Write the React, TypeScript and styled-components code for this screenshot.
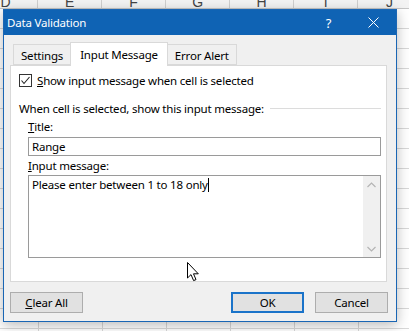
import React from 'react';
import styled, { createGlobalStyle } from 'styled-components';

const GlobalStyle = createGlobalStyle`
  html, body {
    margin: 0;
    padding: 0;
    background: #fff;
  }
  body {
    font-family: 'Noto Sans', 'Open Sans', sans-serif;
    font-size: 11.5px;
    letter-spacing: -0.2px;
    color: #000;
  }
`;

const Sheet = styled.div`
  position: relative;
  width: 409px;
  height: 331px;
  overflow: hidden;
  background: #fff;
`;

const ColumnHeader = styled.div`
  display: flex;
  height: 8px;
  margin-left: -26px;
  background: #f3f3f3;
  border-bottom: 1px solid #c6c6c6;
`;

const ColumnCell = styled.div`
  flex: 0 0 64px;
  height: 8px;
  box-sizing: border-box;
  border-right: 1px solid #cfcfcf;
  display: flex;
  align-items: flex-end;
  justify-content: center;
  overflow: hidden;
  font-family: 'Liberation Sans', sans-serif;
  font-size: 14px;
  line-height: 1;
  color: #444;

  span {
    margin-bottom: -1px;
  }
`;

const Grid = styled.div`
  height: 322px;
  background-image: linear-gradient(to right, #d8d8d8 1px, transparent 1px),
    linear-gradient(to bottom, #d8d8d8 1px, transparent 1px);
  background-size: 64px 100%, 100% 20px;
  background-position: 38px 0, 0 19px;
`;

const Dialog = styled.div`
  position: absolute;
  left: 3px;
  top: 9px;
  width: 394px;
  height: 313px;
  box-sizing: border-box;
  border: 1px solid #1a66b4;
  background: #f0f0f0;
  display: flex;
  flex-direction: column;
  box-shadow: 0 3px 12px rgba(0, 0, 0, 0.28);
`;

const TitleBar = styled.div`
  height: 25px;
  background: #0f63b4;
  display: flex;
  align-items: center;
  color: #fff;
`;

const TitleText = styled.div`
  flex: 1;
  padding-left: 3px;
  font-size: 11.5px;
`;

const CaptionButton = styled.div`
  width: 45px;
  height: 25px;
  display: flex;
  align-items: center;
  justify-content: center;
  color: #fff;
  font-size: 13px;
`;

const Body = styled.div`
  flex: 1;
  display: flex;
  flex-direction: column;
  padding: 7px 9px 8px 6px;
`;

const TabStrip = styled.div`
  display: flex;
  align-items: flex-end;
  padding-left: 3px;
  position: relative;
  z-index: 1;
`;

const Tab = styled.div<{ $active?: boolean }>`
  box-sizing: border-box;
  height: ${(p) => (p.$active ? '24px' : '21px')};
  margin-bottom: ${(p) => (p.$active ? '-1px' : '0')};
  padding: ${(p) => (p.$active ? '0 9px' : '0 7px')};
  display: flex;
  align-items: center;
  justify-content: center;
  background: ${(p) => (p.$active ? '#fff' : '#f0f0f0')};
  border: 1px solid #d9d9d9;
  border-bottom: ${(p) => (p.$active ? 'none' : '1px solid #d9d9d9')};
  & + & {
    margin-left: -1px;
  }
  padding-top: ${(p) => (p.$active ? '0' : '1px')};
`;

const Panel = styled.div`
  height: 217px;
  box-sizing: border-box;
  background: #fff;
  border: 1px solid #d9d9d9;
  padding: 8px 5px 0 8px;
  display: flex;
  flex-direction: column;
`;

const CheckRow = styled.label`
  display: flex;
  align-items: center;
  gap: 5px;
  height: 13px;
`;

const CheckBox = styled.span`
  width: 13px;
  height: 13px;
  box-sizing: border-box;
  border: 1px solid #333;
  display: flex;
  align-items: center;
  justify-content: center;
`;

const GroupLabel = styled.div`
  display: flex;
  align-items: center;
  height: 16px;
  margin-top: 13px;
  white-space: nowrap;

  &::after {
    content: '';
    flex: 1;
    height: 1px;
    margin-left: 6px;
    background: #dcdcdc;
  }
`;

const Fields = styled.div`
  display: flex;
  flex-direction: column;
  margin-left: 9px;
`;

const FieldLabel = styled.div<{ $gap: number }>`
  height: 16px;
  line-height: 16px;
  margin-top: ${(p) => p.$gap}px;
`;

const TextBox = styled.div`
  height: 19px;
  box-sizing: border-box;
  border: 1px solid #9a9a9a;
  margin-top: 2px;
  padding-left: 3px;
  display: flex;
  align-items: center;
`;

const MemoBox = styled.div`
  height: 83px;
  box-sizing: border-box;
  border: 1px solid #9a9a9a;
  margin-top: 1px;
  display: flex;
`;

const MemoText = styled.div`
  flex: 1;
  padding: 1px 0 0 3px;
  line-height: 16px;
`;

const Caret = styled.span`
  display: inline-block;
  width: 1px;
  height: 14px;
  background: #000;
  vertical-align: -3px;
`;

const ScrollBar = styled.div`
  width: 17px;
  background: #f0f0f0;
  display: flex;
  flex-direction: column;
  justify-content: space-between;
`;

const ScrollArrow = styled.div`
  height: 17px;
  display: flex;
  align-items: center;
  justify-content: center;
`;

const ButtonRow = styled.div`
  display: flex;
  align-items: center;
  gap: 11px;
  margin-top: 10px;
  margin-right: -1px;
`;

const Button = styled.div<{ $default?: boolean }>`
  width: 73px;
  height: 21px;
  box-sizing: border-box;
  background: #e1e1e1;
  border: ${(p) => (p.$default ? '2px solid #1a73c9' : '1px solid #adadad')};
  display: flex;
  align-items: center;
  justify-content: center;
`;

const Spacer = styled.div`
  flex: 1;
`;

const Pointer = styled.svg`
  position: absolute;
  left: 187px;
  top: 262px;
`;

const columns = ['D', 'E', 'F', 'G', 'H', 'I', 'J'];

const Chevron: React.FC<{ up?: boolean }> = ({ up }) => (
  <svg width="9" height="6" viewBox="0 0 9 6">
    <polyline
      points={up ? '0.5,5 4.5,1 8.5,5' : '0.5,1 4.5,5 8.5,1'}
      fill="none"
      stroke="#b4b4b4"
      strokeWidth="1.2"
    />
  </svg>
);

const App: React.FC = () => (
  <>
    <GlobalStyle />
    <Sheet>
      <ColumnHeader>
        {columns.map((c) => (
          <ColumnCell key={c}>
            <span>{c}</span>
          </ColumnCell>
        ))}
      </ColumnHeader>
      <Grid />

      <Dialog>
        <TitleBar>
          <TitleText>Data Validation</TitleText>
          <CaptionButton>?</CaptionButton>
          <CaptionButton>
            <svg width="11" height="11" viewBox="0 0 11 11">
              <path d="M0.5 0.5 L10.5 10.5 M10.5 0.5 L0.5 10.5" stroke="#fff" strokeWidth="1" />
            </svg>
          </CaptionButton>
        </TitleBar>

        <Body>
          <TabStrip>
            <Tab>Settings</Tab>
            <Tab $active>Input Message</Tab>
            <Tab>Error Alert</Tab>
          </TabStrip>

          <Panel>
            <CheckRow>
              <CheckBox>
                <svg width="11" height="11" viewBox="0 0 11 11">
                  <polyline points="1.5,5.5 4,8.5 9.5,2" fill="none" stroke="#222" strokeWidth="1.1" />
                </svg>
              </CheckBox>
              <span>
                <u>S</u>how input message when cell is selected
              </span>
            </CheckRow>

            <GroupLabel>When cell is selected, show this input message:</GroupLabel>

            <Fields>
              <FieldLabel $gap={3}>
                <u>T</u>itle:
              </FieldLabel>
              <TextBox>Range</TextBox>
              <FieldLabel $gap={2}>
                <u>I</u>nput message:
              </FieldLabel>
              <MemoBox>
                <MemoText>
                  Please enter between 1 to 18 only
                  <Caret />
                </MemoText>
                <ScrollBar>
                  <ScrollArrow>
                    <Chevron up />
                  </ScrollArrow>
                  <ScrollArrow>
                    <Chevron />
                  </ScrollArrow>
                </ScrollBar>
              </MemoBox>
            </Fields>
          </Panel>

          <ButtonRow>
            <Button>
              <span>
                <u>C</u>lear All
              </span>
            </Button>
            <Spacer />
            <Button $default>OK</Button>
            <Button>Cancel</Button>
          </ButtonRow>
        </Body>
      </Dialog>

      <Pointer width="13" height="20" viewBox="0 0 13 20">
        <path
          d="M0.5 0.5 L0.5 16 L4 12.6 L6.6 18.6 L9 17.6 L6.5 11.8 L11.3 11.8 Z"
          fill="#fff"
          stroke="#000"
          strokeWidth="1"
          strokeLinejoin="round"
        />
      </Pointer>
    </Sheet>
  </>
);

export default App;
